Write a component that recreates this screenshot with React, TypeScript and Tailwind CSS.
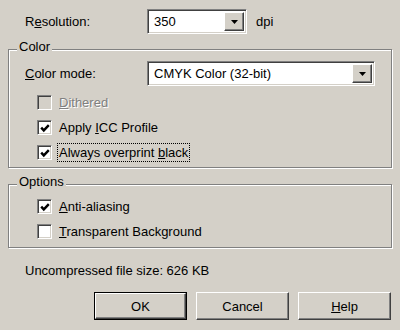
import React from "react";

const sunken =
  "border border-t-[#808080] border-l-[#808080] border-b-white border-r-white shadow-[inset_1px_1px_0_#404040,inset_-1px_-1px_0_#d4d0c8]";
const raised =
  "border border-t-white border-l-white border-b-[#404040] border-r-[#404040] shadow-[inset_-1px_-1px_0_#808080,inset_1px_1px_0_#d4d0c8]";

function Arrow() {
  return (
    <svg width="7" height="4" viewBox="0 0 7 4">
      <path d="M0 0 H7 L3.5 4 Z" fill="#000" />
    </svg>
  );
}

function Combo({ value, width }: { value: string; width: string }) {
  return (
    <div className={`${sunken} ${width} h-[25px] bg-white flex items-center p-[2px]`}>
      <span className="flex-1 pl-[4px] text-black">{value}</span>
      <span className={`${raised} w-[20px] h-full bg-[#d4d0c8] flex items-center justify-center`}>
        <Arrow />
      </span>
    </div>
  );
}

function CheckRow({
  checked,
  disabled,
  focus,
  children,
}: {
  checked?: boolean;
  disabled?: boolean;
  focus?: boolean;
  children: React.ReactNode;
}) {
  return (
    <div className="flex items-center h-[25px] pl-[28px]">
      <span
        className={`${sunken} w-[15px] h-[15px] flex items-center justify-center ${
          disabled ? "bg-[#d4d0c8]" : "bg-white"
        }`}
      >
        {checked && (
          <svg width="10" height="10" viewBox="0 0 10 10">
            <path d="M1.2 4.6 L3.8 7.4 L8.8 2.2" stroke="#000" strokeWidth="2.4" fill="none" />
          </svg>
        )}
      </span>
      <span
        className={`ml-[6px] px-[1px] ${
          focus ? "py-[2px] outline outline-1 outline-dotted outline-black" : ""
        } ${disabled ? "text-[#808080] [text-shadow:1px_1px_0_#fff]" : "text-black"}`}
      >
        {children}
      </span>
    </div>
  );
}

function Group({ title, className, children }: { title: string; className: string; children: React.ReactNode }) {
  return (
    <div
      className={`relative mx-[8px] border border-[#808080] shadow-[inset_1px_1px_0_#fff,1px_1px_0_#fff] ${className}`}
    >
      <span className="absolute -top-[10px] left-[8px] bg-[#d4d0c8] px-[2px] text-black">{title}</span>
      {children}
    </div>
  );
}

function Button({ children, isDefault }: { children: React.ReactNode; isDefault?: boolean }) {
  return (
    <div className={`w-[93px] h-[28px] ${isDefault ? "border border-black" : ""}`}>
      <div className={`${raised} w-full h-full flex items-center justify-center text-black`}>{children}</div>
    </div>
  );
}

export default function App() {
  return (
    <div
      className="w-[400px] h-[330px] bg-[#d4d0c8] text-[13px] leading-none overflow-hidden"
      style={{ fontFamily: '"Liberation Sans", Arial, sans-serif' }}
    >
      {/* Resolution */}
      <div className="flex items-center pt-[9px] pl-[25px]">
        <span className="w-[122px]">
          R<u>e</u>solution:
        </span>
        <Combo value="350" width="w-[100px]" />
        <span className="ml-[9px]">dpi</span>
      </div>

      {/* Color */}
      <Group title="Color" className="mt-[15px] h-[119px]">
        <div className="flex items-center pl-[16px] pt-[11px]">
          <span className="w-[122px]">
            <u>C</u>olor mode:
          </span>
          <Combo value="CMYK Color (32-bit)" width="w-[228px]" />
        </div>
        <div className="pt-[4px]">
          <CheckRow disabled>
            <u>D</u>ithered
          </CheckRow>
          <CheckRow checked>
            Apply <u>I</u>CC Profile
          </CheckRow>
          <CheckRow checked focus>
            Always overprint <u>b</u>lack
          </CheckRow>
        </div>
      </Group>

      {/* Options */}
      <Group title="Options" className="mt-[16px] h-[64px]">
        <div className="pt-[9px]">
          <CheckRow checked>
            <u>A</u>nti-aliasing
          </CheckRow>
          <CheckRow>
            <u>T</u>ransparent Background
          </CheckRow>
        </div>
      </Group>

      <div className="pl-[25px] pt-[16px] text-black">Uncompressed file size: 626 KB</div>

      <div className="flex justify-end gap-[9px] pr-[9px] pt-[15px]">
        <Button isDefault>OK</Button>
        <Button>Cancel</Button>
        <Button>
          <u>H</u>elp
        </Button>
      </div>
    </div>
  );
}
